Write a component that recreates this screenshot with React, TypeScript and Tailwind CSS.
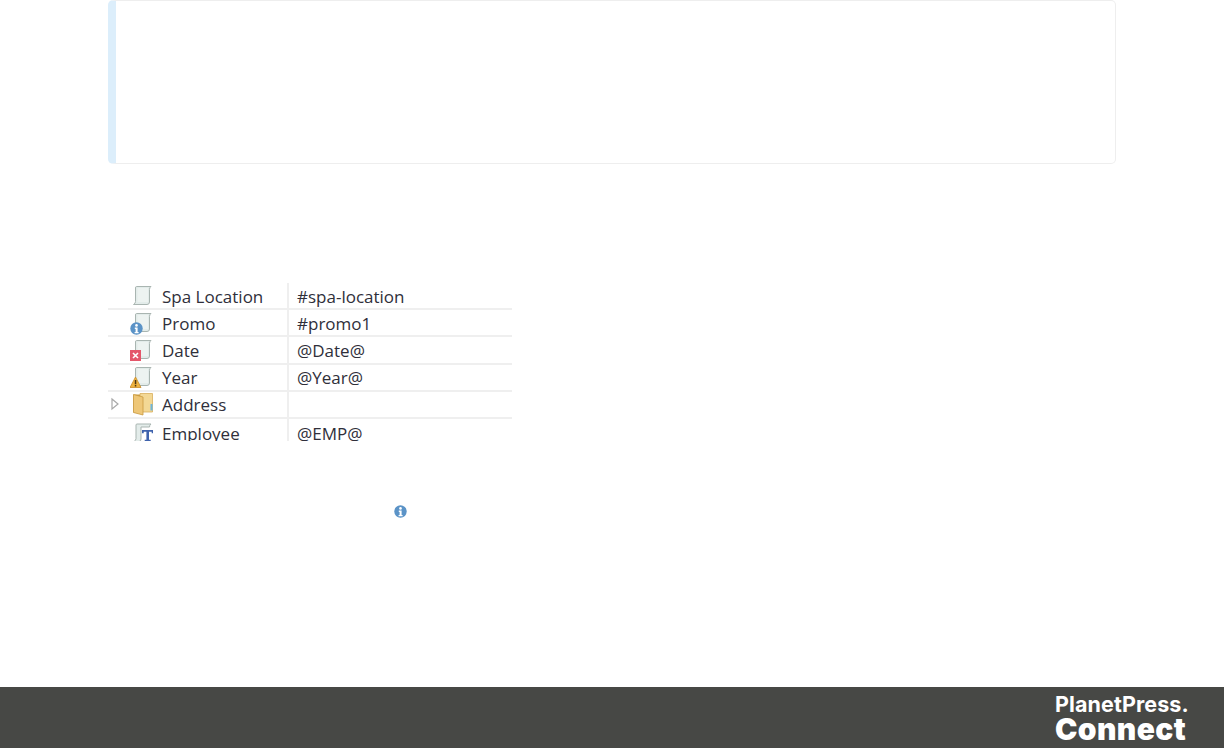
const FONT = "font-['Open_Sans','Noto_Sans',sans-serif]";

function Sheet() {
  return (
    <>
      <path d="M6.5 2.5H21Q19.5 3.5 19.5 5.5V18Q19.5 20.5 17 20.5H3.5Q5.5 19.5 5.5 17.5V4Q5.5 2.5 6.5 2.5z" fill="#e3ecea" stroke="#a9b5b1" strokeWidth="1" />
      <path d="M7.5 4H18V18H7.5z" fill="#edf3f1" />
    </>
  );
}

function InfoBadge({ x = 0, y = 0, size = 13 }: { x?: number; y?: number; size?: number }) {
  const s = size / 13;
  return (
    <g transform={`translate(${x} ${y}) scale(${s})`}>
      <circle cx="6.5" cy="6.5" r="6.2" fill="#5b93c7" />
      <circle cx="6.5" cy="3.4" r="1.3" fill="#fff" />
      <path d="M4.8 5.6h2.8v4.3h1v1.3H4.6V9.9h1V6.9h-.8z" fill="#fff" />
    </g>
  );
}

function RowIcon({ kind }: { kind: string }) {
  return (
    <svg width="26" height="24" viewBox="0 0 26 24" className="block">
      {kind === "folder" ? (
        <g>
          <path d="M3.5 2.5h7v18h-7z" fill="#c99a3e" />
          <path d="M10 1.5h12.5v18.5H10z" fill="#f3d895" stroke="#d8ae5c" strokeWidth="0.8" />
          <path d="M3.5 2.5l9.5 2.5v18l-9.5-2.5z" fill="#eec778" stroke="#c9993f" strokeWidth="0.8" />
          <path d="M20.5 12h2v6.5h-2z" fill="#6db6dd" />
        </g>
      ) : kind === "text" ? (
        <g>
          <path d="M7 3H21Q19.5 4 19.5 6H11V18Q11 20.5 9 20.5H4Q6 19.5 6 17.5V4Q6 3 7 3z" fill="#e3ecea" stroke="#a9b5b1" strokeWidth="1" />
          <path d="M12 9h11v3.2h-1.3v-1.4H19v8h1.7v1.7h-6v-1.7h1.7v-8h-2.7v1.4H12z" fill="#3f63ad" />
        </g>
      ) : (
        <Sheet />
      )}
      {kind === "info" && <InfoBadge x={0} y={11} />}
      {kind === "error" && (
        <g>
          <rect x="0" y="12" width="11" height="11" fill="#e4566a" />
          <path d="M3 15l5 5M8 15l-5 5" stroke="#fff" strokeWidth="1.6" />
        </g>
      )}
      {kind === "warning" && (
        <g>
          <path d="M5.5 12L11 22.5H0z" fill="#eeb23f" stroke="#c98d2b" strokeWidth="0.8" strokeLinejoin="round" />
          <path d="M4.8 15h1.5v4.2H4.8zM4.8 20h1.5v1.5H4.8z" fill="#4b3510" />
        </g>
      )}
    </svg>
  );
}

const rows = [
  { kind: "plain", name: "Spa Location", value: "#spa-location" },
  { kind: "info", name: "Promo", value: "#promo1" },
  { kind: "error", name: "Date", value: "@Date@" },
  { kind: "warning", name: "Year", value: "@Year@" },
  { kind: "folder", name: "Address", value: "" },
  { kind: "text", name: "Employee", value: "@EMP@" },
];

export default function App() {
  return (
    <div className={`flex h-[748px] w-[1224px] flex-col overflow-hidden bg-white ${FONT}`}>
      <div className="ml-[108px] h-[164px] w-[1008px] shrink-0 rounded-[5px] border border-l-[8px] border-[#eeeeee] border-l-[#dceefb]" />

      {/* data model table */}
      <div className="ml-[108px] mt-[119px] h-[158px] w-[404px] shrink-0 overflow-hidden text-[17px] text-[#2f2f3a]">
        {rows.map((row) => (
          <div key={row.name} className="flex h-[27.2px] items-center border-b-2 border-[#efefef] last:border-b-0">
            <div className="flex h-full w-[181px] items-center border-r-2 border-[#efefef]">
              <div className="flex w-[22px] justify-start pl-[2px]">
                {row.kind === "folder" && (
                  <svg width="10" height="14" viewBox="0 0 10 14">
                    <path d="M2 2l6 5-6 5z" fill="#fff" stroke="#a8a8a8" strokeWidth="1.2" />
                  </svg>
                )}
              </div>
              <RowIcon kind={row.kind} />
              <span className="ml-[6px] whitespace-nowrap pt-px leading-none">{row.name}</span>
            </div>
            <span className="ml-[8px] whitespace-nowrap pt-px leading-none">{row.value}</span>
          </div>
        ))}
      </div>

      <div className="ml-[394px] mt-[64px] h-[13px] w-[13px] shrink-0">
        <svg width="13" height="13" viewBox="0 0 13 13" className="block">
          <InfoBadge size={13} />
        </svg>
      </div>

      {/* footer */}
      <div className="mt-auto flex h-[61px] shrink-0 items-center justify-end bg-[#474845] pr-[35px] text-white">
        <div className="flex w-[134px] flex-col font-['Inter',sans-serif]">
          <span className="text-[21.5px] leading-[24px] font-bold tracking-[0.1px]">PlanetPress.</span>
          <span className="text-[30px] leading-[27px] font-black tracking-[0.4px]">Connect</span>
        </div>
      </div>
    </div>
  );
}
